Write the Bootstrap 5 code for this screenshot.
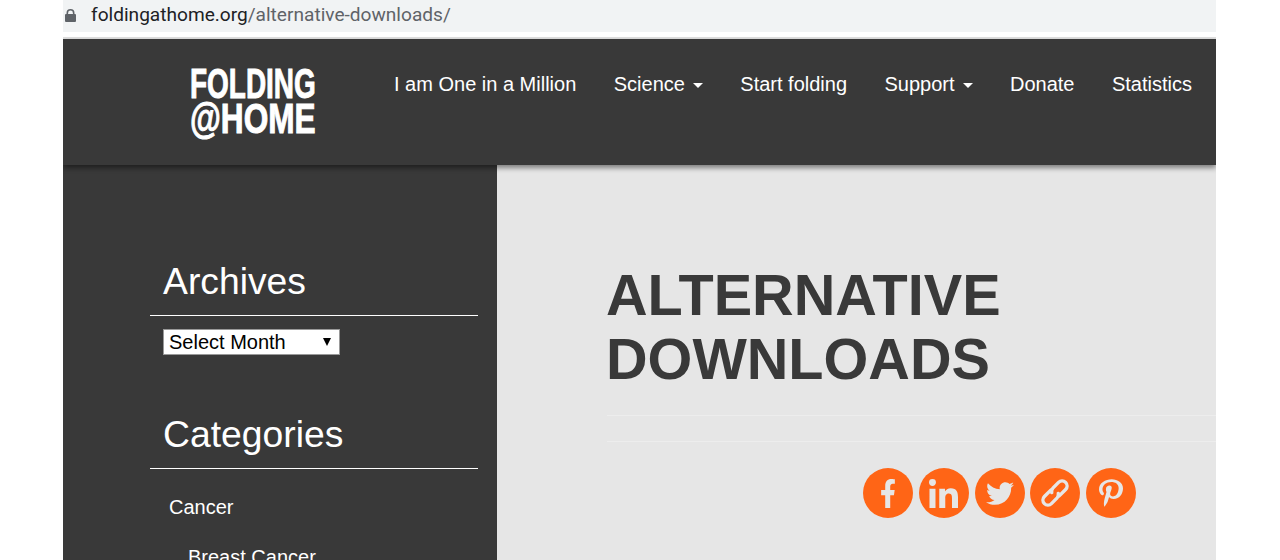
<!DOCTYPE html>
<html lang="en">
<head>
    <meta charset="UTF-8">
    <meta name="viewport" content="width=device-width, initial-scale=1.0">
    <title>Alternative Downloads</title>
    <link href="https://cdn.jsdelivr.net/npm/bootstrap@5.3.0/dist/css/bootstrap.min.css" rel="stylesheet">
    <style>
        html, body { height: 560px; overflow: hidden; }
        body { background: #fff; font-family: "Liberation Sans", Arial, sans-serif; }
        .page-frame { width: 1153px; margin-left: 63px; height: 560px; overflow: hidden; }
        .url-bar { height: 32px; background: #f1f3f4; padding: 0 0 2px 2px; font-family: "Roboto", "Liberation Sans", sans-serif; font-size: 19.1px; color: #5f6368; gap: 15px; }
        .url-bar b { font-weight: 400; color: #202124; }
        .url-gap { height: 7px; border-bottom: 2px solid #e0e0e0; }
        .site-header { height: 126px; background: #393939; position: relative; z-index: 2; box-shadow: 0 3px 5px rgba(0,0,0,.45); padding-left: 127px; }
        .site-logo { width: 127px; margin-top: 27px; color: #fff; font-weight: 700; font-size: 43px; line-height: 35px; white-space: nowrap; -webkit-text-stroke: 1px #fff; }
        .logo-line { display: block; transform-origin: left center; }
        .logo-top { transform: scaleX(.65); }
        .logo-bottom { transform: scaleX(.735); }
        .site-menu { margin-left: 77px; margin-top: 33px; gap: 37.45px; }
        .site-menu a { color: #fff; font-size: 20px; line-height: 24px; padding: 0; text-decoration: none; white-space: nowrap; }
        .site-menu .dropdown-toggle::after { margin-left: 8px; vertical-align: 3px; border-top-width: 5px; border-left-width: 5px; border-right-width: 5px; }
        .content-wrap { height: 395px; overflow: hidden; }
        .side-panel { width: 434px; background: #393939; color: #fff; padding: 90px 19px 0 87px; flex-shrink: 0; }
        .widget-title { font-size: 37.3px; line-height: 44px; font-weight: 400; margin: 0; padding: 4px 0 12px 13px; border-bottom: 1px solid #fff; }
        .select-wrap { position: relative; width: 177px; margin: 13px 0 53px 13px; }
        .select-wrap::after { content: ""; position: absolute; right: 9px; top: 9px; border-top: 8px solid #000; border-left: 4px solid transparent; border-right: 4px solid transparent; pointer-events: none; }
        .month-select { display: block; width: 177px; height: 26px; font-size: 20px; line-height: 22px; font-family: "Liberation Sans", sans-serif; border: 1px solid #999; background: #fff; color: #000; padding: 0 0 0 5px; border-radius: 0; appearance: none; }
        .cat-list { list-style: none; margin: 0; padding: 26px 0 0 19px; font-size: 20px; line-height: 24px; }
        .cat-list ul { list-style: none; margin: 0; padding: 26px 0 0 19px; }
        .main-panel { background: #e6e6e6; flex-grow: 1; padding: 98px 0 0 110px; }
        .page-title { font-size: 57.6px; line-height: 64px; font-weight: 700; color: #393939; margin: 0 0 24px -1px; text-transform: uppercase; }
        .thin-rule { height: 1px; background: #ededed; margin-bottom: 25px; }
        .share-row { gap: 5.75px; padding-top: 1px; margin-left: 256px; }
        .share-btn { width: 50px; height: 50px; background: #ff6516; border-radius: 50%; }
        .share-btn svg { fill: #e6e6e6; }
    </style>
</head>
<body>
    <div class="page-frame">
        <!-- Address bar -->
        <div class="url-bar d-flex align-items-center">
            <svg width="11" height="13" viewBox="0 0 11 13"><path fill="#5f6368" d="M1.5 5V4a4 4 0 0 1 8 0v1h.5a1 1 0 0 1 1 1v6a1 1 0 0 1-1 1H1a1 1 0 0 1-1-1V6a1 1 0 0 1 1-1zm1.6 0h4.8V4a2.4 2.4 0 0 0-4.8 0z"/></svg>
            <span><b>foldingathome.org</b>/alternative-downloads/</span>
        </div>
        <div class="url-gap"></div>

        <!-- Header -->
        <header class="site-header d-flex">
            <a class="site-logo text-decoration-none" href="#">
                <span class="logo-line logo-top">FOLDING</span>
                <span class="logo-line logo-bottom">@HOME</span>
            </a>
            <nav class="site-menu nav flex-nowrap">
                <a href="#">I am One in a Million</a>
                <a class="dropdown-toggle" href="#">Science</a>
                <a href="#">Start folding</a>
                <a class="dropdown-toggle" href="#">Support</a>
                <a href="#">Donate</a>
                <a href="#">Statistics</a>
            </nav>
        </header>

        <div class="content-wrap d-flex">
            <!-- Sidebar -->
            <aside class="side-panel">
                <h2 class="widget-title">Archives</h2>
                <div class="select-wrap">
                    <select class="month-select">
                        <option>Select Month</option>
                    </select>
                </div>
                <h2 class="widget-title">Categories</h2>
                <ul class="cat-list">
                    <li>Cancer
                        <ul>
                            <li>Breast Cancer</li>
                        </ul>
                    </li>
                </ul>
            </aside>

            <!-- Main content -->
            <main class="main-panel">
                <h1 class="page-title">Alternative<br>Downloads</h1>
                <div class="thin-rule"></div>
                <div class="thin-rule"></div>
                <div class="share-row d-flex">
                    <a class="share-btn d-flex align-items-center justify-content-center" href="#">
                        <svg width="16" height="29" viewBox="0 0 320 512" preserveAspectRatio="none"><path d="M279.14 288l14.22-92.66h-88.91v-60.13c0-25.35 12.42-50.06 52.24-50.06h40.42V6.26S260.43 0 225.36 0c-73.22 0-121.08 44.38-121.08 124.72v70.62H22.89V288h81.39v224h100.17V288z"/></svg>
                    </a>
                    <a class="share-btn d-flex align-items-center justify-content-center" href="#">
                        <svg width="29" height="29" viewBox="0 0 448 448"><path d="M100.28 448H7.4V148.9h92.88zM53.79 108.1C24.09 108.1 0 83.5 0 53.8a53.79 53.79 0 0 1 107.58 0c0 29.7-24.1 54.3-53.79 54.3zM447.9 448h-92.68V302.4c0-34.7-.7-79.2-48.29-79.2-48.29 0-55.69 37.7-55.69 76.7V448h-92.78V148.9h89.08v40.8h1.3c12.4-23.5 42.69-48.3 87.88-48.3 94 0 111.28 61.9 111.28 142.3V448z"/></svg>
                    </a>
                    <a class="share-btn d-flex align-items-center justify-content-center" href="#">
                        <svg width="28" height="25" viewBox="0 48 512 416"><path d="M459.37 151.716c.325 4.548.325 9.097.325 13.645 0 138.72-105.583 298.558-298.558 298.558-59.452 0-114.68-17.219-161.137-47.106 8.447.974 16.568 1.299 25.34 1.299 49.055 0 94.213-16.568 130.274-44.832-46.132-.975-84.792-31.188-98.112-72.772 6.498.974 12.995 1.624 19.818 1.624 9.421 0 18.843-1.3 27.614-3.573-48.081-9.747-84.143-51.98-84.143-102.985v-1.299c13.969 7.797 30.214 12.67 47.431 13.319-28.264-18.843-46.781-51.005-46.781-87.391 0-19.492 5.197-37.36 14.294-52.954 51.655 63.675 129.3 105.258 216.365 109.807-1.624-7.797-2.599-15.918-2.599-24.04 0-57.828 46.782-104.934 104.934-104.934 30.213 0 57.502 12.67 76.67 33.137 23.715-4.548 46.456-13.32 66.599-25.34-7.798 24.366-24.366 44.833-46.132 57.827 21.117-2.273 41.584-8.122 60.426-16.243-14.292 20.791-32.161 39.308-52.628 54.253z"/></svg>
                    </a>
                    <a class="share-btn d-flex align-items-center justify-content-center" href="#">
                        <svg width="34" height="34" viewBox="0 0 34 34"><g fill="none" stroke="#e6e6e6" stroke-width="3.4" stroke-linecap="round" transform="rotate(-45 17 17)"><path d="M16 12H7a5 5 0 0 0 0 10h8a5 5 0 0 0 4-2.4"/><path d="M18 22h9a5 5 0 0 0 0-10h-8a5 5 0 0 0-4 2.4"/></g></svg>
                    </a>
                    <a class="share-btn d-flex align-items-center justify-content-center" href="#">
                        <svg width="24" height="28" viewBox="0 0 384 512" preserveAspectRatio="none"><path d="M204 6.5C101.4 6.5 0 74.9 0 185.6 0 256 39.6 296 63.6 296c9.9 0 15.6-27.6 15.6-35.4 0-9.3-23.7-29.1-23.7-67.8 0-80.4 61.2-137.4 140.4-137.4 68.1 0 118.5 38.7 118.5 109.8 0 53.1-21.3 152.7-90.3 152.7-24.9 0-46.2-18-46.2-43.8 0-37.8 26.4-74.4 26.4-113.4 0-66.2-93.9-54.2-93.9 25.8 0 16.8 2.1 35.4 9.6 50.7-13.8 59.4-42 147.9-42 209.1 0 18.9 2.7 37.5 4.5 56.4 3.4 3.8 1.7 3.4 6.9 1.5 50.4-69 48.6-82.5 71.4-172.8 12.3 23.4 44.1 36 69.3 36 106.2 0 153.9-103.5 153.9-196.8C384 71.3 298.2 6.5 204 6.5z"/></svg>
                    </a>
                </div>
            </main>
        </div>
    </div>
    <script src="https://cdn.jsdelivr.net/npm/bootstrap@5.3.0/dist/js/bootstrap.bundle.min.js"></script>
</body>
</html>
